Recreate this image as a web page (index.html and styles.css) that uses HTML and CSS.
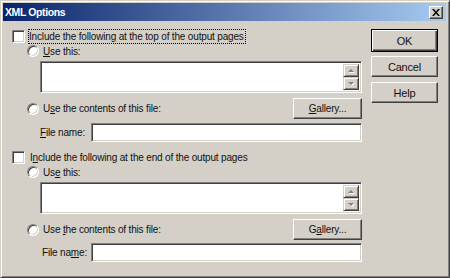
FILE: index.html
```html
<!DOCTYPE html>
<html lang="en">
<head>
    <meta charset="UTF-8">
    <title>XML Options</title>
    <link rel="stylesheet" href="styles.css">
</head>
<body>
    <div class="window">
        <div class="titlebar">
            <span class="title">XML Options</span>
            <span class="close-btn">
                <svg width="8" height="7" viewBox="0 0 8 7"><path d="M0 0h2l2 2.5L6 0h2L5 3.5 8 7H6L4 4.5 2 7H0l3-3.5z" fill="#000"/></svg>
            </span>
        </div>

        <div class="content">
            <div class="main">
                <!-- top of page -->
                <label class="row check-row first">
                    <span class="checkbox"></span>
                    <span class="focus">Include the following at the top of the output pages</span>
                </label>
                <label class="row radio-row">
                    <span class="radio"></span>
                    <span><u>U</u>se this:</span>
                </label>
                <div class="field area">
                    <div class="spin">
                        <span class="spin-btn"><i class="arrow up"></i></span>
                        <span class="spin-btn"><i class="arrow down"></i></span>
                    </div>
                </div>
                <div class="row file-row">
                    <label class="radio-label">
                        <span class="radio"></span>
                        <span>U<u>s</u>e the contents of this file:</span>
                    </label>
                    <span class="btn gallery"><u>G</u>allery...</span>
                </div>
                <div class="row name-row">
                    <span class="name-label"><u>F</u>ile name:</span>
                    <div class="field input"></div>
                </div>

                <!-- end of page -->
                <label class="row check-row second">
                    <span class="checkbox"></span>
                    <span>I<u>n</u>clude the following at the end of the output pages</span>
                </label>
                <label class="row radio-row">
                    <span class="radio"></span>
                    <span>Us<u>e</u> this:</span>
                </label>
                <div class="field area">
                    <div class="spin">
                        <span class="spin-btn"><i class="arrow up"></i></span>
                        <span class="spin-btn"><i class="arrow down"></i></span>
                    </div>
                </div>
                <div class="row file-row">
                    <label class="radio-label">
                        <span class="radio"></span>
                        <span>Use <u>t</u>he contents of this file:</span>
                    </label>
                    <span class="btn gallery">G<u>a</u>llery...</span>
                </div>
                <div class="row name-row last">
                    <span class="name-label">File na<u>m</u>e:</span>
                    <div class="field input"></div>
                </div>
            </div>

            <div class="buttons">
                <span class="btn default">OK</span>
                <span class="btn">Cancel</span>
                <span class="btn">Help</span>
            </div>
        </div>
    </div>
</body>
</html>
```

FILE: styles.css
```css
body { margin: 0; background: #d4d0c8; font-family: "Liberation Sans", Arial, sans-serif; font-size: 10px; letter-spacing: -0.17px; color: #111; }
u { text-decoration: underline; text-underline-offset: 1px; }

.window { width: 450px; height: 278px; box-sizing: border-box; background: #d4d0c8; padding: 3px; border: 1px solid; border-color: #d4d0c8 #404040 #404040 #d4d0c8; box-shadow: inset 1px 1px 0 #fff, inset -1px -1px 0 #808080; }

.titlebar { height: 18px; margin: -1px 0 0 -1px; display: flex; align-items: center; justify-content: space-between; padding: 0 4px 0 2px; background: linear-gradient(to right, #0a246a, #a6caf0); }
.title { color: #fff; font-weight: bold; font-size: 10.5px; letter-spacing: -0.4px; }
.close-btn { width: 14px; height: 13px; box-sizing: border-box; display: flex; align-items: center; justify-content: center; background: #d4d0c8; border: 1px solid; border-color: #fff #404040 #404040 #fff; box-shadow: inset -1px -1px 0 #808080; margin-right: -1px; }

.content { display: flex; }
.main { width: 350px; padding-left: 8px; display: flex; flex-direction: column; }
.buttons { display: flex; flex-direction: column; gap: 5px; padding: 8px 0 0 9px; }

.row { display: flex; align-items: center; }
.check-row { height: 15px; gap: 5px; }
.check-row.first { margin-top: 8px; }
.check-row.second { margin-top: 8px; }
.radio-row { height: 14px; gap: 4px; padding-left: 15px; }
.radio-label { display: flex; align-items: center; gap: 4px; padding-left: 15px; }

.focus { outline: 1px dotted #000; outline-offset: 0; padding: 1px 1px 1px 0; margin-left: -1px; }

.checkbox { width: 13px; height: 13px; box-sizing: border-box; background: #fff; border: 1px solid; border-color: #808080 #fff #fff #808080; box-shadow: inset 1px 1px 0 #404040, inset -1px -1px 0 #d4d0c8; }
.radio { width: 12px; height: 12px; box-sizing: border-box; border-radius: 50%; background: #fff; border: 1px solid; border-color: #808080 #fff #fff #808080; box-shadow: inset 1px 1px 0 #404040, inset -1px -1px 0 #d4d0c8; }

.field { box-sizing: border-box; background: #fff; border: 1px solid; border-color: #808080 #fff #fff #808080; box-shadow: inset 1px 1px 0 #404040, inset -1px -1px 0 #d4d0c8; }
.area { margin: 3px 0 0 28px; height: 32px; width: 322px; display: flex; justify-content: flex-end; padding: 2px 2px 2px 0; }
.input { flex: 1; height: 19px; }

.spin { width: 16px; display: flex; flex-direction: column; }
.spin-btn { flex: 1; box-sizing: border-box; background: #d4d0c8; border: 1px solid; border-color: #d4d0c8 #404040 #404040 #d4d0c8; box-shadow: inset 1px 1px 0 #fff, inset -1px -1px 0 #808080; display: flex; align-items: center; justify-content: center; }
.arrow { width: 0; height: 0; border-left: 3px solid transparent; border-right: 3px solid transparent; }
.arrow.up { border-bottom: 3px solid #808080; filter: drop-shadow(1px 1px 0 #fff); }
.arrow.down { border-top: 3px solid #808080; filter: drop-shadow(1px 1px 0 #fff); }

.file-row { height: 21px; margin-top: 5px; justify-content: space-between; }
.name-row { margin-top: 4px; padding-left: 28px; }
.name-row.last { margin-top: 3px; padding-left: 30px; }
.name-label { width: 51px; white-space: nowrap; }
.name-row.last .name-label { width: 49px; }

.btn { box-sizing: border-box; display: flex; align-items: center; justify-content: center; background: #d4d0c8; border: 1px solid; border-color: #fff #404040 #404040 #fff; box-shadow: inset -1px -1px 0 #808080; font-size: 11px; }
.gallery { width: 69px; height: 21px; font-size: 10px; }
.buttons .btn { width: 67px; height: 21px; }
.buttons .default { height: 23px; margin-bottom: -1px; border: 1px solid #000; box-shadow: inset 1px 1px 0 #fff, inset -1px -1px 0 #404040, inset -2px -2px 0 #808080; }
```
